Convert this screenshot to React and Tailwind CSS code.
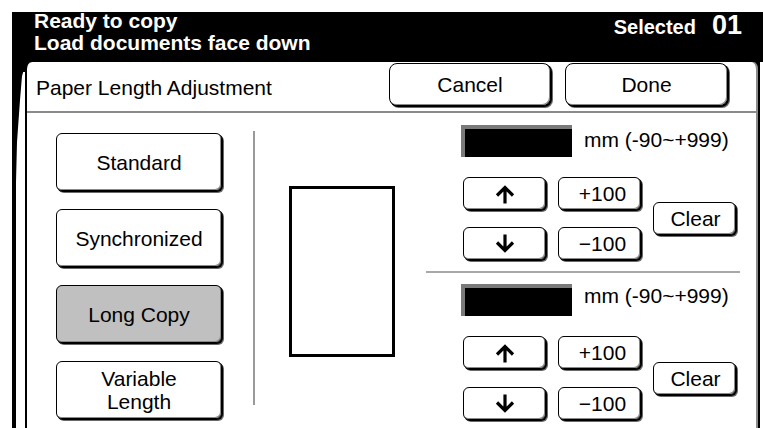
import React from 'react';

// bevelled touch-panel key
const Key = ({ className = '', grey = false, children }) => (
  <button
    type="button"
    className={`flex shrink-0 items-center justify-center rounded-[6px] border border-black text-[21px] leading-[23px] shadow-[inset_-1px_-1px_0_#8a8a8a,1px_1px_0_#000,2px_2px_0_#6a6a6a] ${
      grey ? 'bg-[#c0c0c0]' : 'bg-white'
    } ${className}`}
  >
    {children}
  </button>
);

const Arrow = ({ down }) => (
  <svg width="22" height="20" viewBox="0 0 22 20" className={down ? 'rotate-180' : ''}>
    <path d="M11 19.5V3.5M3 11.5l8-8 8 8" fill="none" stroke="#000" strokeWidth="3.2" />
  </svg>
);

const Readout = ({ textClass }) => (
  <div className="flex items-start">
    <div className="h-[32px] w-[111px] border-l-4 border-t-4 border-[#7a7a7a] bg-black" />
    <span className={`ml-[12px] text-[21px] leading-[23px] ${textClass}`}>mm (-90~+999)</span>
  </div>
);

const Stepper = ({ rowGap }) => (
  <div className="flex items-center pl-[2px]">
    <div className={`grid grid-cols-[83px_83px] gap-x-[12px] ${rowGap}`}>
      <Key className="h-[33px] w-[83px]">
        <Arrow />
      </Key>
      <Key className="h-[33px] w-[83px] pl-[6px]">+100</Key>
      <Key className="h-[33px] w-[83px]">
        <Arrow down />
      </Key>
      <Key className="h-[33px] w-[83px] pl-[6px]">−100</Key>
    </div>
    <Key className="ml-[12px] h-[33px] w-[83px] pl-[2px]">Clear</Key>
  </div>
);

export default function App() {
  return (
    <div className="h-[428px] w-[763px] overflow-hidden bg-white pl-[12px] pt-[12px] font-['Liberation_Sans',Arial,sans-serif] text-black">
      <div className="flex h-[416px] w-[751px] flex-col">
        {/* status bar */}
        <header className="flex h-[50px] shrink-0 justify-between bg-black pl-[22px] pr-[21px] font-bold text-white">
          <div className="-mt-[2px] text-[21px] leading-[22px]">
            <div>Ready to copy</div>
            <div>Load documents face down</div>
          </div>
          <div className="flex items-baseline gap-[16px]">
            <span className="text-[20px] leading-[22px]">Selected</span>
            <span className="text-[27px] leading-none">01</span>
          </div>
        </header>

        <div className="flex min-h-0 w-[748px] flex-1 bg-[linear-gradient(#000_0_10px,transparent_10px)]">
          <svg width="13" height="366" className="shrink-0">
            <polygon points="0,0 13,0 13,4 10,14 8,38 5,80 4,120 4,366 0,366" fill="#000" />
          </svg>

          {/* dialog panel */}
          <section className="flex w-[735px] flex-col rounded-t-[7px] border-x-2 border-black bg-white shadow-[inset_-2px_0_0_#8a8a8a]">
            <div className="flex h-[49px] shrink-0 items-start pr-[30px] pt-px">
              <span className="self-center pl-[9px] text-[21px] leading-[23px]">Paper Length Adjustment</span>
              <Key className="ml-auto h-[43px] w-[162px] rounded-[8px]">Cancel</Key>
              <Key className="ml-[14px] h-[43px] w-[163px] rounded-[8px]">Done</Key>
            </div>
            <div className="h-[2px] shrink-0 bg-[#8a8a8a]" />

            <div className="flex min-h-0 flex-1">
              <div className="flex flex-col gap-[18px] pl-[29px] pt-[20px]">
                <Key className="h-[58px] w-[166px]">Standard</Key>
                <Key className="h-[58px] w-[166px]">Synchronized</Key>
                <Key grey className="h-[58px] w-[166px]">Long Copy</Key>
                <Key className="h-[58px] w-[166px]">
                  <span>
                    Variable
                    <br />
                    Length
                  </span>
                </Key>
              </div>

              <div className="ml-[31px] mt-[18px] h-[274px] w-[2px] bg-[#9a9a9a]" />

              <div className="ml-[34px] mt-[73px] h-[171px] w-[106px] border-[3px] border-black" />

              <div className="ml-[31px] w-[314px] pt-[12px]">
                <div className="pl-[35px]">
                  <Readout textClass="mt-[3px]" />
                  <div className="mt-[20px]">
                    <Stepper rowGap="gap-y-[17px]" />
                  </div>
                </div>
                <div className="mt-[11px] h-[2px] bg-[#a8a8a8]" />
                <div className="mt-[11px] pl-[35px]">
                  <Readout textClass="mt-0" />
                  <div className="mt-[20px]">
                    <Stepper rowGap="gap-y-[18px]" />
                  </div>
                </div>
              </div>
            </div>
          </section>
        </div>
      </div>
    </div>
  );
}
